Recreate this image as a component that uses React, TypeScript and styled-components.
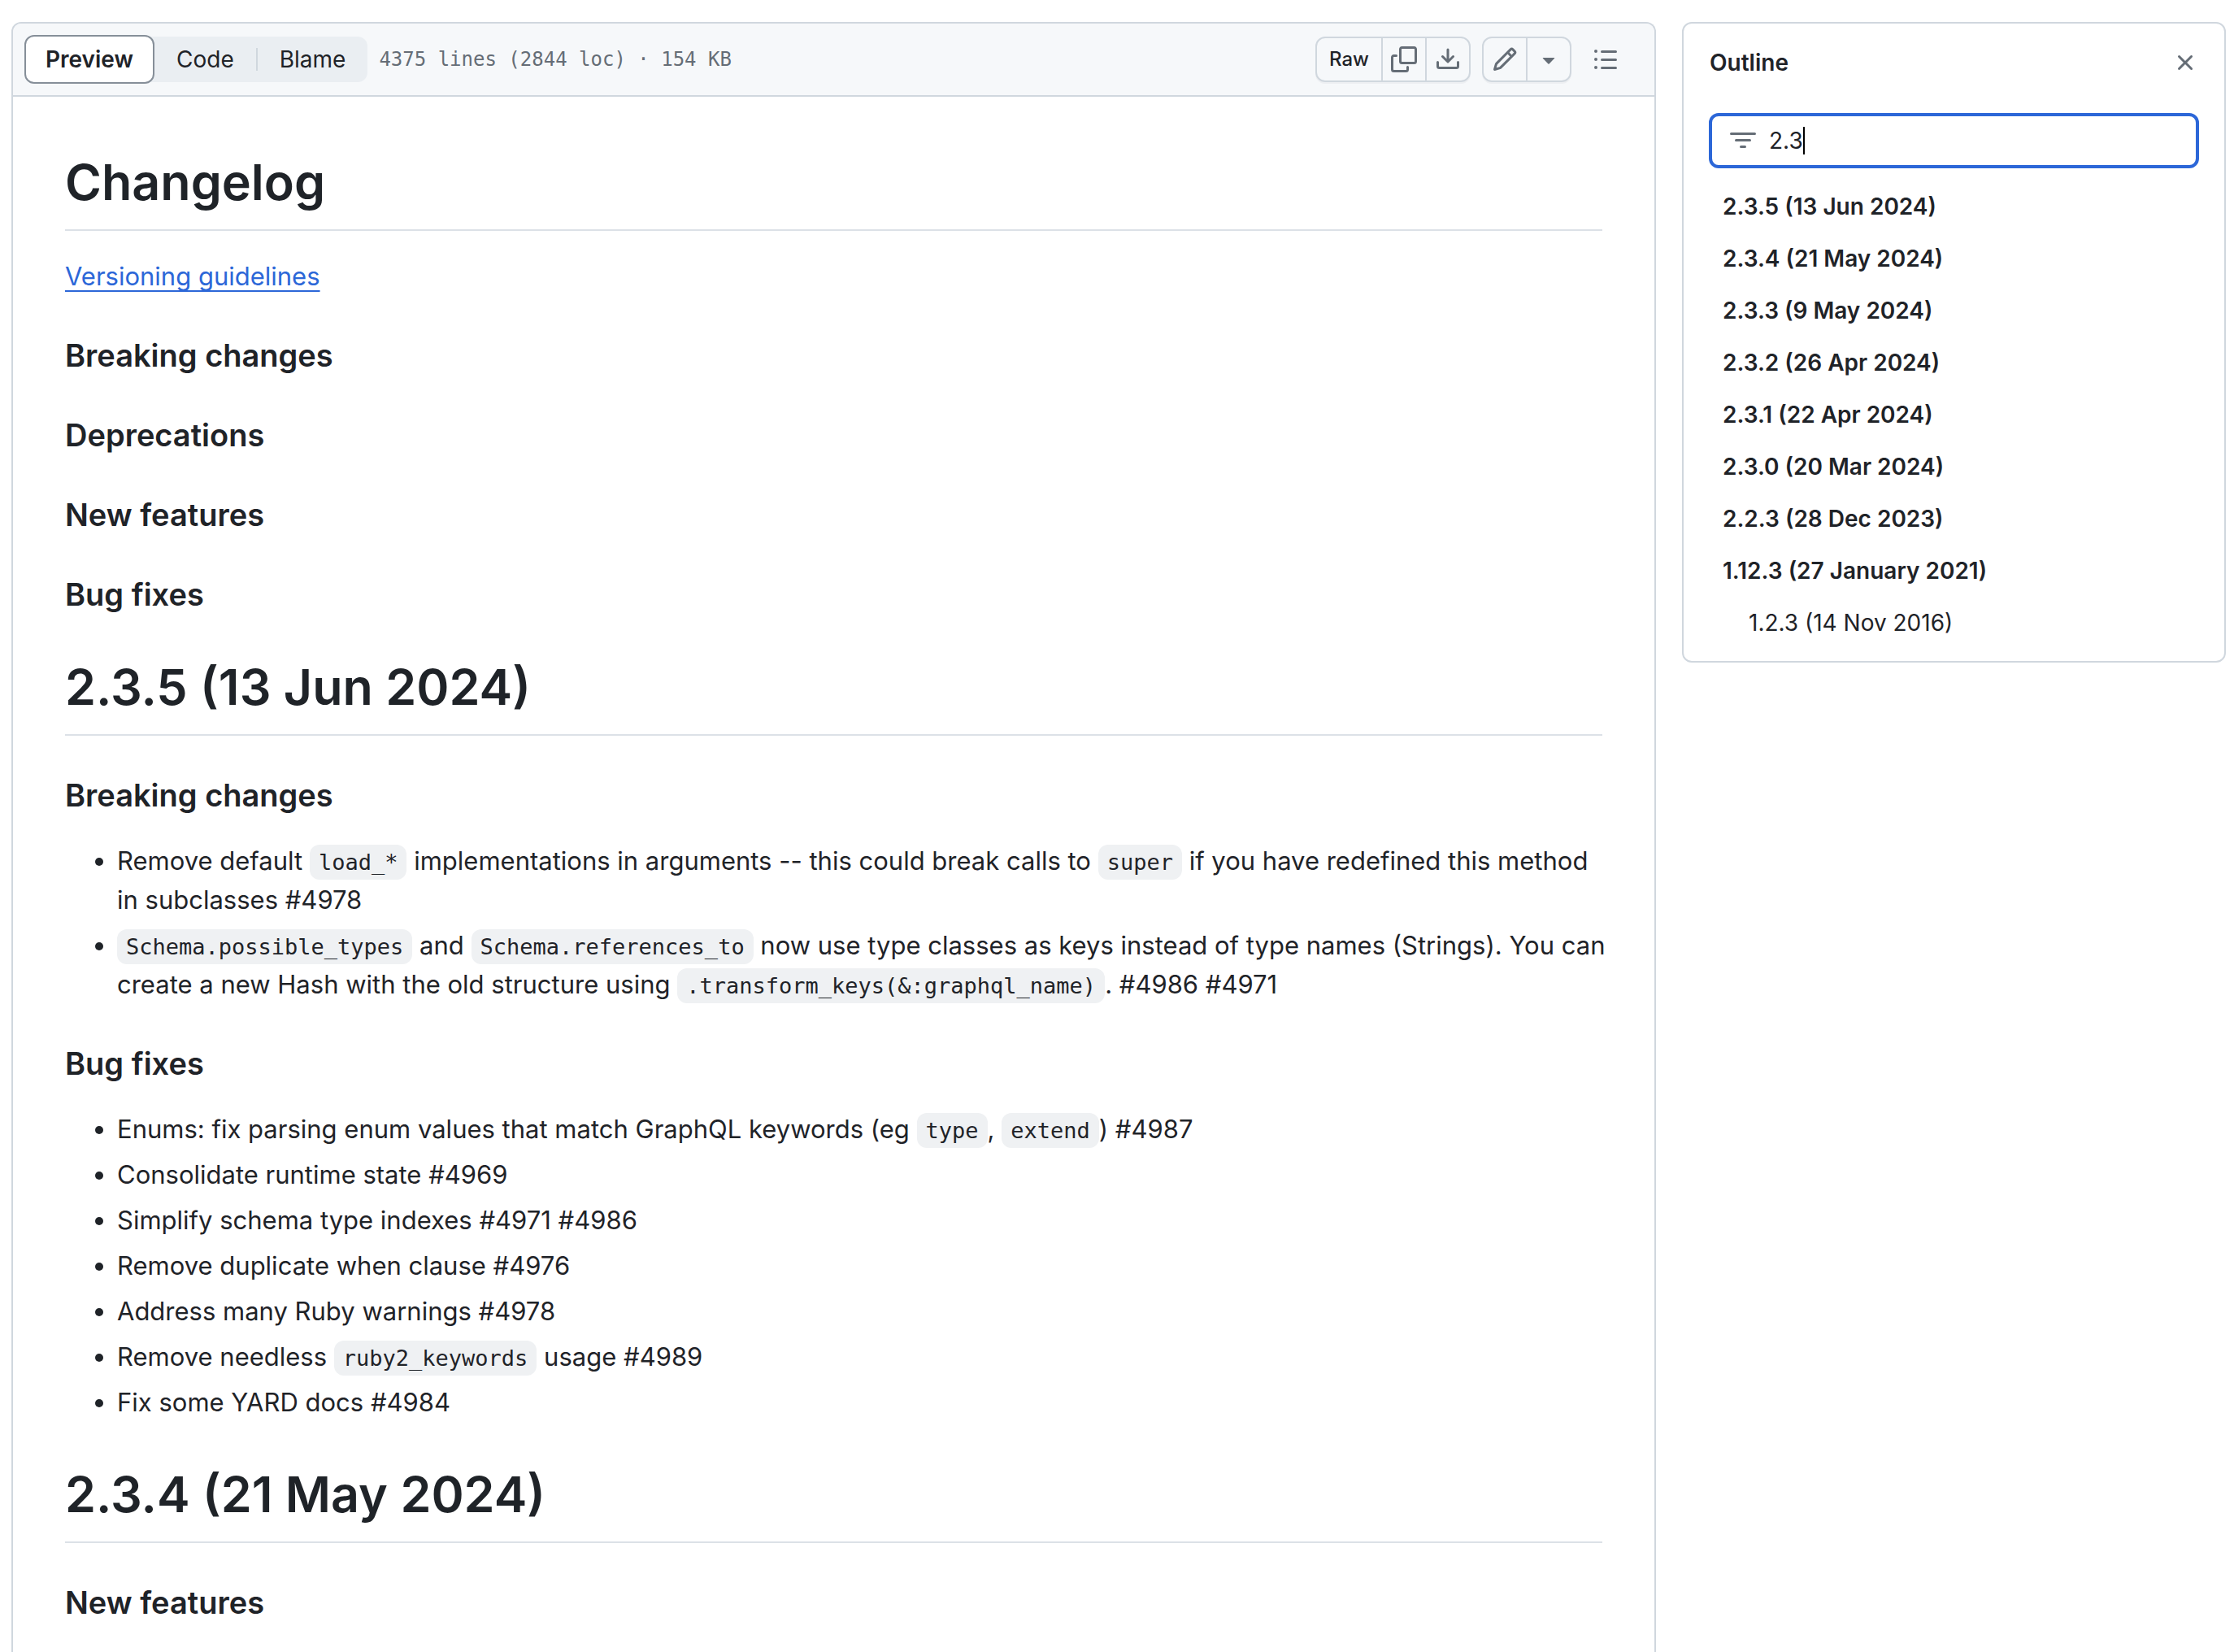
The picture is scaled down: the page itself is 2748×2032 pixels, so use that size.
import React from "react";
import styled, { createGlobalStyle } from "styled-components";

const color = {
  text: "#1f2328",
  muted: "#656d76",
  border: "#d0d7de",
  rule: "#dce1e7",
  subtle: "#f6f8fa",
  track: "#eaeef2",
  code: "#eff1f3",
  accent: "#2c67d8",
  selected: "#868f99",
};

const sans = `Inter, "Liberation Sans", sans-serif`;
const mono = `"DejaVu Sans Mono", "Liberation Mono", monospace`;

const GlobalStyle = createGlobalStyle`
  *, *::before, *::after { box-sizing: border-box; }
  body {
    margin: 0;
    overflow: hidden;
    background: #ffffff;
    color: ${color.text};
    font-family: ${sans};
    font-size: 31px;
    line-height: 48px;
  }
  button, input { font: inherit; color: inherit; }
`;

const Page = styled.main`
  display: flex;
  align-items: flex-start;
  gap: 32px;
  min-height: 100vh;
  padding: 27px 10px 0 14px;
`;

const FilePanel = styled.section`
  flex: 1;
  min-width: 0;
  align-self: stretch;
  border: 2px solid ${color.border};
  border-bottom: 0;
  border-radius: 12px 12px 0 0;
`;

const FileHeader = styled.header`
  display: flex;
  align-items: center;
  gap: 14px;
  height: 90px;
  padding: 0 32px 0 14px;
  background: ${color.subtle};
  border-bottom: 2px solid ${color.border};
  border-radius: 10px 10px 0 0;
`;

const Segments = styled.div`
  display: flex;
  align-items: center;
  height: 56px;
  background: ${color.track};
  border-radius: 12px;
`;

const Segment = styled.button<{ $active?: boolean }>`
  height: 60px;
  padding: 0 ${(p) => (p.$active ? 24 : 25)}px;
  border: 2px solid ${(p) => (p.$active ? color.selected : "transparent")};
  border-radius: 12px;
  background: ${(p) => (p.$active ? "#ffffff" : "transparent")};
  font-size: 28px;
  line-height: 40px;
  font-weight: ${(p) => (p.$active ? 600 : 400)};
`;

const Divider = styled.span`
  width: 2px;
  height: 28px;
  background: ${color.border};
`;

const FileMeta = styled.span`
  flex: 1;
  color: ${color.muted};
  font-family: ${mono};
  font-size: 24px;
  line-height: 36px;
`;

const ButtonGroup = styled.div`
  display: flex;
  height: 56px;
  border: 2px solid ${color.border};
  border-radius: 12px;
  box-shadow: 0 2px 0 rgba(31, 35, 40, 0.04);
`;

const ToolButton = styled.button<{ $text?: boolean }>`
  display: flex;
  align-items: center;
  justify-content: center;
  min-width: 52px;
  padding: 0 ${(p) => (p.$text ? 15 : 0)}px;
  border: 0;
  background: transparent;
  color: ${(p) => (p.$text ? color.text : color.muted)};
  font-size: 24px;
  line-height: 40px;
  font-weight: 500;

  & + & {
    min-width: 54px;
    border-left: 2px solid ${color.border};
  }
`;

const IconButton = styled.button`
  display: flex;
  align-items: center;
  justify-content: center;
  padding: 0;
  border: 0;
  background: transparent;
  color: ${color.muted};
`;

const ListButton = styled(IconButton)`
  width: 56px;
  height: 56px;
`;

const Svg = styled.svg`
  display: block;
  flex: none;
  width: 32px;
  height: 32px;
  fill: currentColor;
`;

const Article = styled.article`
  padding: 64px 64px 32px;
`;

const Title = styled.h1`
  margin: 48px 0 32px;
  padding-bottom: 17px;
  border-bottom: 2px solid ${color.rule};
  font-size: 61px;
  line-height: 82px;
  font-weight: 600;

  &:first-child { margin-top: 0; }
`;

const Subtitle = styled.h3`
  margin: 48px 0 32px;
  font-size: 38px;
  line-height: 50px;
  font-weight: 600;
`;

const Paragraph = styled.p`
  margin: 0 0 32px;
`;

const TextLink = styled.a`
  color: ${color.accent};
  text-decoration: underline;
  text-decoration-thickness: 2px;
  text-underline-offset: 6px;
  text-decoration-skip-ink: none;
`;

const Bullets = styled.ul`
  margin: 0 -16px 32px 0;
  padding-left: 64px;
`;

const Bullet = styled.li`
  & + & { margin-top: 8px; }
`;

const Code = styled.code`
  padding: 6px 11px;
  border-radius: 12px;
  background: ${color.code};
  font-family: ${mono};
  font-size: 27px;
  line-height: 32px;
`;

const Outline = styled.aside`
  flex: none;
  width: 669px;
  border: 2px solid ${color.border};
  border-radius: 12px;
`;

const OutlineHeader = styled.div`
  display: flex;
  align-items: center;
  justify-content: space-between;
  height: 96px;
  padding: 0 32px;
`;

const OutlineTitle = styled.h2`
  margin: 0;
  font-size: 28px;
  line-height: 40px;
  font-weight: 600;
`;

const FilterBox = styled.label`
  display: flex;
  align-items: center;
  height: 68px;
  margin: 14px 31px 15px;
  padding: 0 22px;
  border: 4px solid ${color.accent};
  border-radius: 12px;
  color: ${color.muted};
  cursor: text;
`;

const FilterInput = styled.input`
  field-sizing: content;
  margin-left: 16px;
  padding: 0;
  border: 0;
  outline: 0;
  background: transparent;
  color: ${color.text};
  caret-color: transparent;
  font-size: 28px;
  line-height: 40px;
`;

const Caret = styled.span`
  width: 2px;
  height: 34px;
  background: #000000;
`;

const OutlineList = styled.ul`
  margin: 0;
  padding: 0 0 15px;
  list-style: none;
`;

const OutlineLink = styled.a<{ $level: number }>`
  display: block;
  padding: 12px 32px 12px ${(p) => 16 + p.$level * 32}px;
  color: ${color.text};
  text-decoration: none;
  font-size: 28px;
  line-height: 40px;
  font-weight: ${(p) => (p.$level === 1 ? 600 : 400)};
`;

const icons = {
  copy: [
    "M0 6.75C0 5.784.784 5 1.75 5h1.5a.75.75 0 0 1 0 1.5h-1.5a.25.25 0 0 0-.25.25v7.5c0 .138.112.25.25.25h7.5a.25.25 0 0 0 .25-.25v-1.5a.75.75 0 0 1 1.5 0v1.5A1.75 1.75 0 0 1 9.25 16h-7.5A1.75 1.75 0 0 1 0 14.25Z",
    "M5 1.75C5 .784 5.784 0 6.75 0h7.5C15.216 0 16 .784 16 1.75v7.5A1.75 1.75 0 0 1 14.25 11h-7.5A1.75 1.75 0 0 1 5 9.25Zm1.75-.25a.25.25 0 0 0-.25.25v7.5c0 .138.112.25.25.25h7.5a.25.25 0 0 0 .25-.25v-7.5a.25.25 0 0 0-.25-.25Z",
  ],
  download: [
    "M2.75 14A1.75 1.75 0 0 1 1 12.25v-2.5a.75.75 0 0 1 1.5 0v2.5c0 .138.112.25.25.25h10.5a.25.25 0 0 0 .25-.25v-2.5a.75.75 0 0 1 1.5 0v2.5A1.75 1.75 0 0 1 13.25 14Z",
    "M7.25 7.689V2a.75.75 0 0 1 1.5 0v5.689l1.97-1.969a.749.749 0 1 1 1.06 1.06l-3.25 3.25a.749.749 0 0 1-1.06 0L4.22 6.78a.749.749 0 1 1 1.06-1.06l1.97 1.969Z",
  ],
  pencil: [
    "M11.013 1.427a1.75 1.75 0 0 1 2.474 0l1.086 1.086a1.75 1.75 0 0 1 0 2.474l-8.61 8.61c-.21.21-.47.364-.756.445l-3.251.93a.75.75 0 0 1-.927-.928l.929-3.25c.081-.286.235-.547.445-.758l8.61-8.61Zm.176 4.823L9.75 4.81l-6.286 6.287a.253.253 0 0 0-.064.108l-.558 1.953 1.953-.558a.253.253 0 0 0 .108-.064Zm1.238-3.763a.25.25 0 0 0-.354 0L10.811 3.75l1.439 1.44 1.263-1.263a.25.25 0 0 0 0-.354Z",
  ],
  triangle: [
    "m4.427 7.427 3.396 3.396a.25.25 0 0 0 .354 0l3.396-3.396A.25.25 0 0 0 11.396 7H4.604a.25.25 0 0 0-.177.427Z",
  ],
  list: [
    "M5.75 2.5h8.5a.75.75 0 0 1 0 1.5h-8.5a.75.75 0 0 1 0-1.5Zm0 5h8.5a.75.75 0 0 1 0 1.5h-8.5a.75.75 0 0 1 0-1.5Zm0 5h8.5a.75.75 0 0 1 0 1.5h-8.5a.75.75 0 0 1 0-1.5ZM2 14a1 1 0 1 1 0-2 1 1 0 0 1 0 2Zm1-6a1 1 0 1 1-2 0 1 1 0 0 1 2 0ZM2 4a1 1 0 1 1 0-2 1 1 0 0 1 0 2Z",
  ],
  filter: [
    "M.75 3h14.5a.75.75 0 0 1 0 1.5H.75a.75.75 0 0 1 0-1.5ZM3 7.75A.75.75 0 0 1 3.75 7h8.5a.75.75 0 0 1 0 1.5h-8.5A.75.75 0 0 1 3 7.75Zm3 4a.75.75 0 0 1 .75-.75h2.5a.75.75 0 0 1 0 1.5h-2.5a.75.75 0 0 1-.75-.75Z",
  ],
  close: [
    "M3.72 3.72a.75.75 0 0 1 1.06 0L8 6.94l3.22-3.22a.749.749 0 0 1 1.275.326.749.749 0 0 1-.215.734L9.06 8l3.22 3.22a.749.749 0 0 1-.326 1.275.749.749 0 0 1-.734-.215L8 9.06l-3.22 3.22a.751.751 0 0 1-1.042-.018.751.751 0 0 1-.018-1.042L6.94 8 3.72 4.78a.75.75 0 0 1 0-1.06Z",
  ],
};

function Icon({ name }: { name: keyof typeof icons }) {
  return (
    <Svg viewBox="0 0 16 16" aria-hidden="true">
      {icons[name].map((d) => (
        <path key={d} d={d} />
      ))}
    </Svg>
  );
}

const outline = [
  { label: "2.3.5 (13 Jun 2024)", level: 1 },
  { label: "2.3.4 (21 May 2024)", level: 1 },
  { label: "2.3.3 (9 May 2024)", level: 1 },
  { label: "2.3.2 (26 Apr 2024)", level: 1 },
  { label: "2.3.1 (22 Apr 2024)", level: 1 },
  { label: "2.3.0 (20 Mar 2024)", level: 1 },
  { label: "2.2.3 (28 Dec 2023)", level: 1 },
  { label: "1.12.3 (27 January 2021)", level: 1 },
  { label: "1.2.3 (14 Nov 2016)", level: 2 },
];

export default function App() {
  return (
    <>
      <GlobalStyle />
      <Page>
        <FilePanel>
          <FileHeader>
            <Segments>
              <Segment type="button" $active aria-pressed="true">Preview</Segment>
              <Segment type="button">Code</Segment>
              <Divider />
              <Segment type="button">Blame</Segment>
            </Segments>
            <FileMeta>4375 lines (2844 loc) · 154 KB</FileMeta>
            <ButtonGroup>
              <ToolButton type="button" $text>Raw</ToolButton>
              <ToolButton type="button" aria-label="Copy raw file"><Icon name="copy" /></ToolButton>
              <ToolButton type="button" aria-label="Download raw file"><Icon name="download" /></ToolButton>
            </ButtonGroup>
            <ButtonGroup>
              <ToolButton type="button" aria-label="Edit this file"><Icon name="pencil" /></ToolButton>
              <ToolButton type="button" aria-label="More edit options"><Icon name="triangle" /></ToolButton>
            </ButtonGroup>
            <ListButton type="button" aria-label="Outline"><Icon name="list" /></ListButton>
          </FileHeader>

          <Article>
            <Title>Changelog</Title>
            <Paragraph>
              <TextLink href="#versioning">Versioning guidelines</TextLink>
            </Paragraph>
            <Subtitle>Breaking changes</Subtitle>
            <Subtitle>Deprecations</Subtitle>
            <Subtitle>New features</Subtitle>
            <Subtitle>Bug fixes</Subtitle>

            <Title>2.3.5 (13 Jun 2024)</Title>
            <Subtitle>Breaking changes</Subtitle>
            <Bullets>
              <Bullet>
                Remove default <Code>load_*</Code> implementations in arguments -- this could break
                calls to <Code>super</Code> if you have redefined this method in subclasses #4978
              </Bullet>
              <Bullet>
                <Code>Schema.possible_types</Code> and <Code>Schema.references_to</Code> now use type
                classes as keys instead of type names (Strings). You can create a new Hash with the
                old structure using <Code>.transform_keys(&amp;:graphql_name)</Code>. #4986 #4971
              </Bullet>
            </Bullets>
            <Subtitle>Bug fixes</Subtitle>
            <Bullets>
              <Bullet>
                Enums: fix parsing enum values that match GraphQL keywords (eg <Code>type</Code>,{" "}
                <Code>extend</Code>) #4987
              </Bullet>
              <Bullet>Consolidate runtime state #4969</Bullet>
              <Bullet>Simplify schema type indexes #4971 #4986</Bullet>
              <Bullet>Remove duplicate when clause #4976</Bullet>
              <Bullet>Address many Ruby warnings #4978</Bullet>
              <Bullet>
                Remove needless <Code>ruby2_keywords</Code> usage #4989
              </Bullet>
              <Bullet>Fix some YARD docs #4984</Bullet>
            </Bullets>

            <Title>2.3.4 (21 May 2024)</Title>
            <Subtitle>New features</Subtitle>
          </Article>
        </FilePanel>

        <Outline>
          <OutlineHeader>
            <OutlineTitle>Outline</OutlineTitle>
            <IconButton type="button" aria-label="Close outline"><Icon name="close" /></IconButton>
          </OutlineHeader>
          <FilterBox>
            <Icon name="filter" />
            <FilterInput type="text" aria-label="Filter headings" defaultValue="2.3" />
            <Caret />
          </FilterBox>
          <OutlineList>
            {outline.map((item) => (
              <li key={item.label}>
                <OutlineLink href="#heading" $level={item.level}>{item.label}</OutlineLink>
              </li>
            ))}
          </OutlineList>
        </Outline>
      </Page>
    </>
  );
}
